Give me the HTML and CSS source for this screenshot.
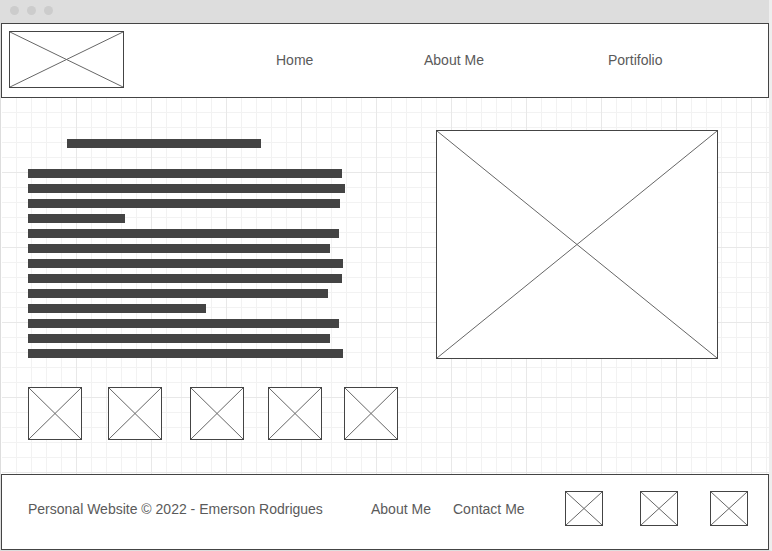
FILE: index.html
```html
<!DOCTYPE html>
<html lang="en">
<head>
<meta charset="utf-8">
<title>Personal Website</title>
<link rel="stylesheet" href="styles.css">
</head>
<body>
<svg class="defs" aria-hidden="true">
  <symbol id="cross" viewBox="0 0 100 100" preserveAspectRatio="none">
    <path d="M0 0L100 100M100 0L0 100" fill="none" stroke="#666" stroke-width="1" vector-effect="non-scaling-stroke"/>
  </symbol>
</svg>
<div class="window">
  <div class="titlebar">
    <span class="dot"></span><span class="dot"></span><span class="dot"></span>
  </div>

  <header class="header">
    <svg class="box logo"><use href="#cross"/></svg>
    <nav class="nav">
      <a href="#">Home</a>
      <a href="#">About Me</a>
      <a href="#">Portifolio</a>
    </nav>
  </header>

  <main class="main">
    <section class="intro">
      <div class="bar heading"></div>
      <div class="lines">
        <div class="bar" style="width:314px"></div>
        <div class="bar" style="width:317px"></div>
        <div class="bar" style="width:312px"></div>
        <div class="bar" style="width:97px"></div>
        <div class="bar" style="width:311px"></div>
        <div class="bar" style="width:302px"></div>
        <div class="bar" style="width:315px"></div>
        <div class="bar" style="width:314px"></div>
        <div class="bar" style="width:300px"></div>
        <div class="bar" style="width:178px"></div>
        <div class="bar" style="width:311px"></div>
        <div class="bar" style="width:302px"></div>
        <div class="bar" style="width:315px"></div>
      </div>
      <div class="thumbs">
        <svg class="box thumb"><use href="#cross"/></svg>
        <svg class="box thumb"><use href="#cross"/></svg>
        <svg class="box thumb"><use href="#cross"/></svg>
        <svg class="box thumb"><use href="#cross"/></svg>
        <svg class="box thumb"><use href="#cross"/></svg>
      </div>
    </section>
    <svg class="box photo"><use href="#cross"/></svg>
  </main>

  <footer class="footer">
    <span>Personal Website © 2022 - Emerson Rodrigues</span>
    <a href="#">About Me</a>
    <a href="#">Contact Me</a>
    <svg class="box social"><use href="#cross"/></svg>
    <svg class="box social"><use href="#cross"/></svg>
    <svg class="box social"><use href="#cross"/></svg>
  </footer>
</div>
</body>
</html>
```
FILE: styles.css
```css
* {
  box-sizing: border-box;
}

body {
  margin: 0;
  background: #fff;
  color: #5a5a5a;
  font: 14px/16px "Liberation Sans", Arial, sans-serif;
}

a {
  color: inherit;
  text-decoration: none;
}

.defs {
  position: absolute;
  width: 0;
  height: 0;
}

.window {
  display: flex;
  flex-direction: column;
  min-height: 100vh;
  border: 0 solid #ddd;
  border-width: 0 3px 1px 1px;
  border-right-color: #eee;
}

.titlebar {
  display: flex;
  gap: 8px;
  height: 23px;
  padding: 6px 9px;
  background: #ddd;
}

.dot {
  width: 9px;
  height: 9px;
  border-radius: 50%;
  background: #ccc;
}

.box {
  display: block;
  border: 1px solid #444;
  background: #fff;
}

.header {
  display: flex;
  align-items: center;
  padding: 7px 0 9px 7px;
  border: 1px solid #444;
  background: #fff;
}

.logo {
  flex: none;
  width: 115px;
  height: 57px;
}

.nav {
  flex: 1;
  display: grid;
  grid-template-columns: 148fr 184fr 160fr;
  padding-left: 152px;
}

.main {
  flex: 1;
  display: grid;
  grid-template-columns: 408fr 282fr;
  align-items: start;
  padding: 32px 51px 34px 26px;
  border-left: 1px solid #fff;
  background:
    linear-gradient(90deg, #e8e8e8 1px, transparent 1px) -1px 0 / 75px 75px,
    linear-gradient(#e8e8e8 1px, transparent 1px) 0 74px / 75px 75px,
    linear-gradient(90deg, #f2f2f2 1px, transparent 1px) -1px 0 / 15px 15px,
    linear-gradient(#f2f2f2 1px, transparent 1px) 0 14px / 15px 15px,
    #fff;
}

.bar {
  height: 9px;
  background: #444;
}

.intro {
  padding-top: 9px;
}

.heading {
  width: 194px;
  margin-left: 39px;
}

.lines {
  display: grid;
  gap: 6px;
  margin: 21px 0 29px;
}

.thumbs {
  display: grid;
  grid-template-columns: 80px 82px 78px 76px 54px;
}

.thumb {
  width: 54px;
  height: 53px;
}

.photo {
  width: 100%;
  height: 229px;
}

.footer {
  display: grid;
  grid-template-columns: 343fr 82fr 112fr 75fr 70fr 58fr;
  align-items: center;
  padding: 16px 0 23px 26px;
  border: 1px solid #444;
  background: #fff;
}

.social {
  width: 38px;
  height: 35px;
}
```
